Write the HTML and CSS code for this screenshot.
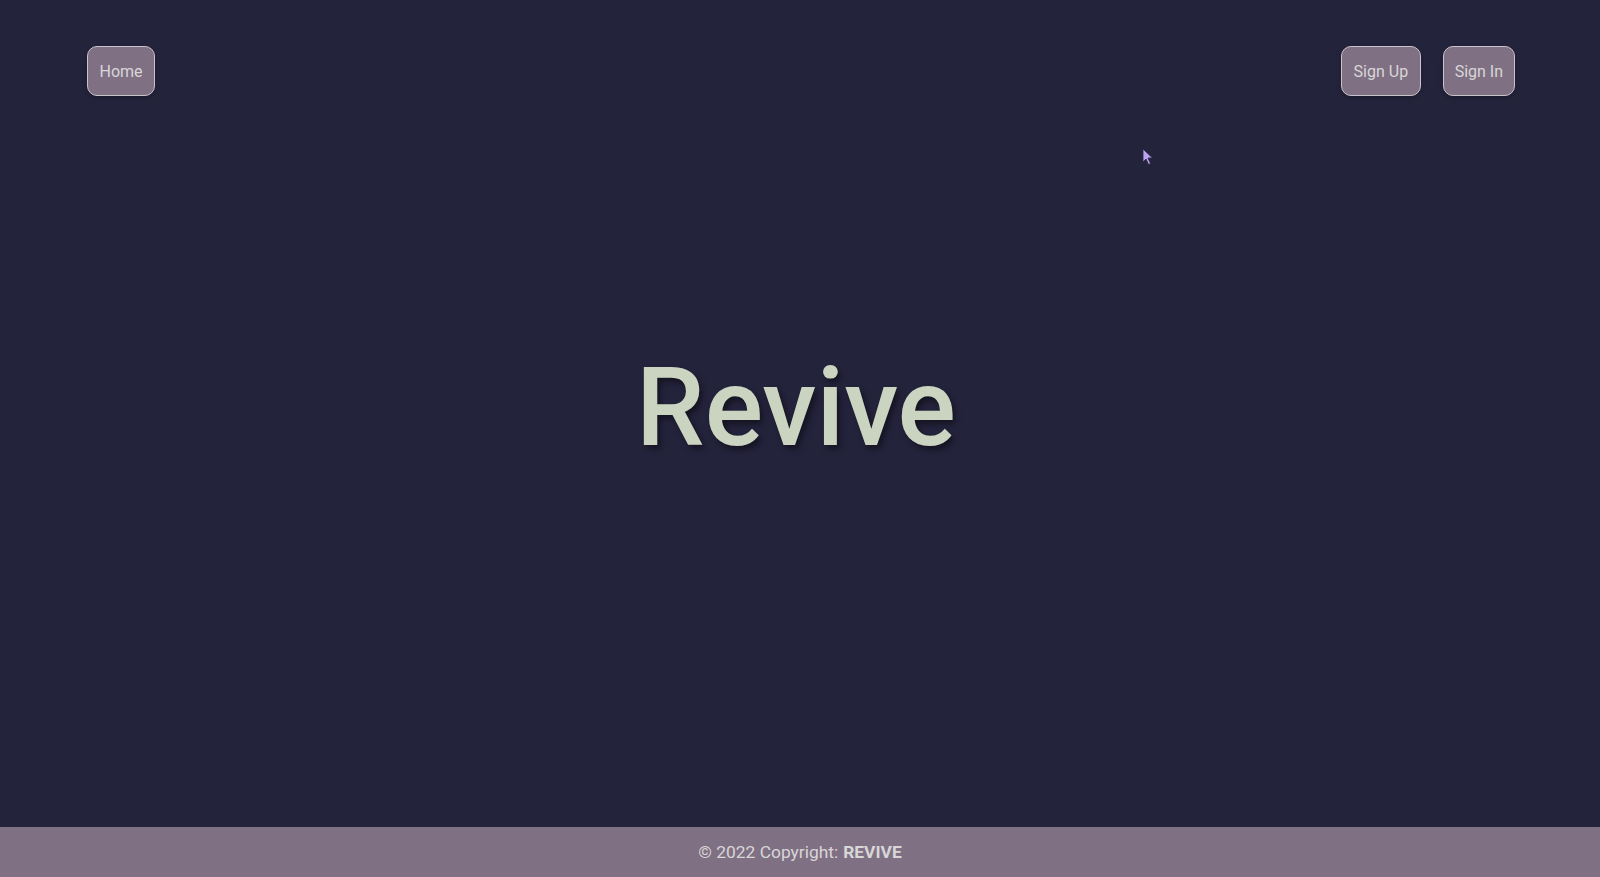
FILE: index.html
```html
<!DOCTYPE html>
<html>
<head>
<meta charset="utf-8">
<link rel="stylesheet" href="styles.css">
</head>
<body>
<div class="page">
  <nav class="nav">
    <a class="btn" href="#">Home</a>
    <div class="nav-right">
      <a class="btn" href="#">Sign Up</a>
      <a class="btn" href="#">Sign In</a>
    </div>
  </nav>
  <main class="hero">
    <h1 class="title">Revive</h1>
  </main>
  <footer class="footer">© 2022 Copyright: <strong>REVIVE</strong></footer>
  <svg class="cursor" width="12" height="18" viewBox="0 0 12 18"><path d="M1 1 L1 14 L4 11 L6.5 16.5 L8.5 15.5 L6 10 L10.5 10 Z" fill="#b9a3ee" stroke="#2a2540" stroke-width="0.8"/></svg>
</div>
</body>
</html>
```
FILE: styles.css
```css
html, body {
  margin: 0;
  padding: 0;
  background: #24233c;
  font-family: Roboto, "Liberation Sans", sans-serif;
}
.page {
  position: relative;
  height: 877px;
  display: flex;
  flex-direction: column;
  overflow: hidden;
}
.nav {
  display: flex;
  justify-content: space-between;
  align-items: flex-start;
  padding: 46px 85px 0 87px;
}
.nav-right {
  display: flex;
  gap: 22px;
}
.btn {
  display: flex;
  align-items: center;
  height: 50px;
  box-sizing: border-box;
  padding: 0 11px;
  border: 1px solid #c9c3cc;
  border-radius: 10px;
  background: #7f7083;
  color: #d9d6d8;
  font-size: 16px;
  text-decoration: none;
  box-shadow: 0 2px 4px rgba(0,0,0,0.25);
}
.btn:first-child {
  padding: 0 11.5px;
}
.hero {
  flex: 1;
  display: flex;
  align-items: center;
  justify-content: center;
}
.title {
  margin: 0 8px 106px 0;
  font-size: 109px;
  font-weight: 500;
  color: #cbd4c1;
  text-shadow: 3px 4px 6px rgba(0,0,0,0.45);
  line-height: 1;
}
.footer {
  height: 50px;
  background: #7f7083;
  color: #d9d6d8;
  font-size: 17.4px;
  display: flex;
  align-items: center;
  justify-content: center;
  gap: 5px;
}
.footer strong {
  font-weight: 700;
}
.cursor {
  position: absolute;
  left: 1142px;
  top: 148px;
}
```
